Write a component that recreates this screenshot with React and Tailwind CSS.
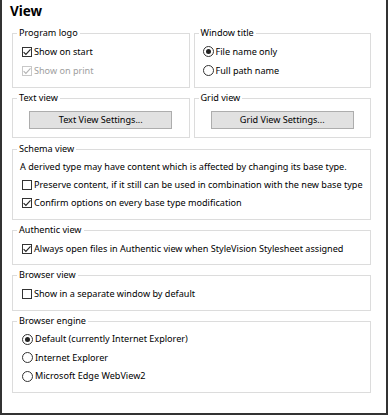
import React from 'react'

const font = { fontFamily: '"Noto Sans", "Open Sans", sans-serif' }

function Group({ title, className = '', children }) {
  return (
    <fieldset className={`border border-[#dcdcdc] min-w-0 ${className}`}>
      <legend className="ml-[4px] px-[2px] text-[9.1px] leading-[14px] text-black">{title}</legend>
      {children}
    </fieldset>
  )
}

function Checkbox({ label, checked, disabled }) {
  const stroke = disabled ? '#b4b4b4' : '#222'
  return (
    <div className="flex items-center h-full pl-[2px]">
      <span
        className={`flex items-center justify-center w-[10px] h-[10px] border bg-white shrink-0 ${
          disabled ? 'border-[#c8c8c8]' : 'border-[#333]'
        }`}
      >
        {checked && (
          <svg width="8" height="8" viewBox="0 0 8 8">
            <path d="M0.6 4.1 L2.9 6.4 L7.5 1.3" fill="none" stroke={stroke} strokeWidth="1.1" />
          </svg>
        )}
      </span>
      <span className={`ml-[2px] whitespace-nowrap ${disabled ? 'text-[#a0a0a0]' : 'text-black'}`}>
        {label}
      </span>
    </div>
  )
}

function Radio({ label, checked }) {
  return (
    <div className="flex items-center h-full pl-[2px]">
      <span className="flex items-center justify-center w-[11px] h-[11px] rounded-full border border-[#333] bg-white shrink-0">
        {checked && <span className="w-[5px] h-[5px] rounded-full bg-[#222]" />}
      </span>
      <span className="ml-[2px] whitespace-nowrap text-black">{label}</span>
    </div>
  )
}

function SettingsButton({ label }) {
  return (
    <div className="pt-[6px] pb-[8px] flex justify-center">
      <button className="w-[143px] h-[18px] bg-[#e1e1e1] border border-[#adadad] text-[9.1px] leading-none text-black">
        {label}
      </button>
    </div>
  )
}

export default function App() {
  return (
    <div
      className="w-[388px] h-[415px] bg-white border-l-2 border-r-2 border-b-2 border-[#333] text-[9.1px] text-black"
      style={font}
    >
      {/* Title */}
      <h1 className="pl-[8px] h-[22px] mb-[4px] text-[13.5px] leading-[22px] font-bold">View</h1>

      <div className="ml-[10px] w-[359px] flex flex-col">
        {/* Program logo / Window title */}
        <div className="grid grid-cols-2 gap-[4px]">
          <Group title="Program logo">
            <div className="px-[7px] pt-[2px] pb-[7px]">
              <div className="h-[19px]"><Checkbox label="Show on start" checked /></div>
              <div className="h-[19px]"><Checkbox label="Show on print" checked disabled /></div>
            </div>
          </Group>
          <Group title="Window title">
            <div className="px-[6px] pt-[2px] pb-[7px]">
              <div className="h-[19px]"><Radio label="File name only" checked /></div>
              <div className="h-[19px]"><Radio label="Full path name" /></div>
            </div>
          </Group>
        </div>

        {/* Text view / Grid view */}
        <div className="grid grid-cols-2 gap-[4px] mt-[3px]">
          <Group title="Text view">
            <SettingsButton label="Text View Settings..." />
          </Group>
          <Group title="Grid view">
            <SettingsButton label="Grid View Settings..." />
          </Group>
        </div>

        {/* Schema view */}
        <Group title="Schema view" className="mt-[4px]">
          <div className="px-[7px] pt-[2px] pb-[7px]">
            <div className="h-[18px] flex items-center whitespace-nowrap">
              A derived type may have content which is affected by changing its base type.
            </div>
            <div className="h-[18px]">
              <Checkbox label="Preserve content, if it still can be used in combination with the new base type" />
            </div>
            <div className="h-[18px]">
              <Checkbox label="Confirm options on every base type modification" checked />
            </div>
          </div>
        </Group>

        {/* Authentic view */}
        <Group title="Authentic view" className="mt-[3px]">
          <div className="px-[7px] pt-[2px] pb-[6px]">
            <div className="h-[19px]">
              <Checkbox label="Always open files in Authentic view when StyleVision Stylesheet assigned" checked />
            </div>
          </div>
        </Group>

        {/* Browser view */}
        <Group title="Browser view" className="mt-[3px]">
          <div className="px-[7px] pt-[2px] pb-[7px]">
            <div className="h-[19px]">
              <Checkbox label="Show in a separate window by default" />
            </div>
          </div>
        </Group>

        {/* Browser engine */}
        <Group title="Browser engine" className="mt-[3px]">
          <div className="px-[7px] pt-[2px] pb-[6px]">
            <div className="h-[18.5px]"><Radio label="Default (currently Internet Explorer)" checked /></div>
            <div className="h-[18.5px]"><Radio label="Internet Explorer" /></div>
            <div className="h-[18.5px]"><Radio label="Microsoft Edge WebView2" /></div>
          </div>
        </Group>
      </div>
    </div>
  )
}
